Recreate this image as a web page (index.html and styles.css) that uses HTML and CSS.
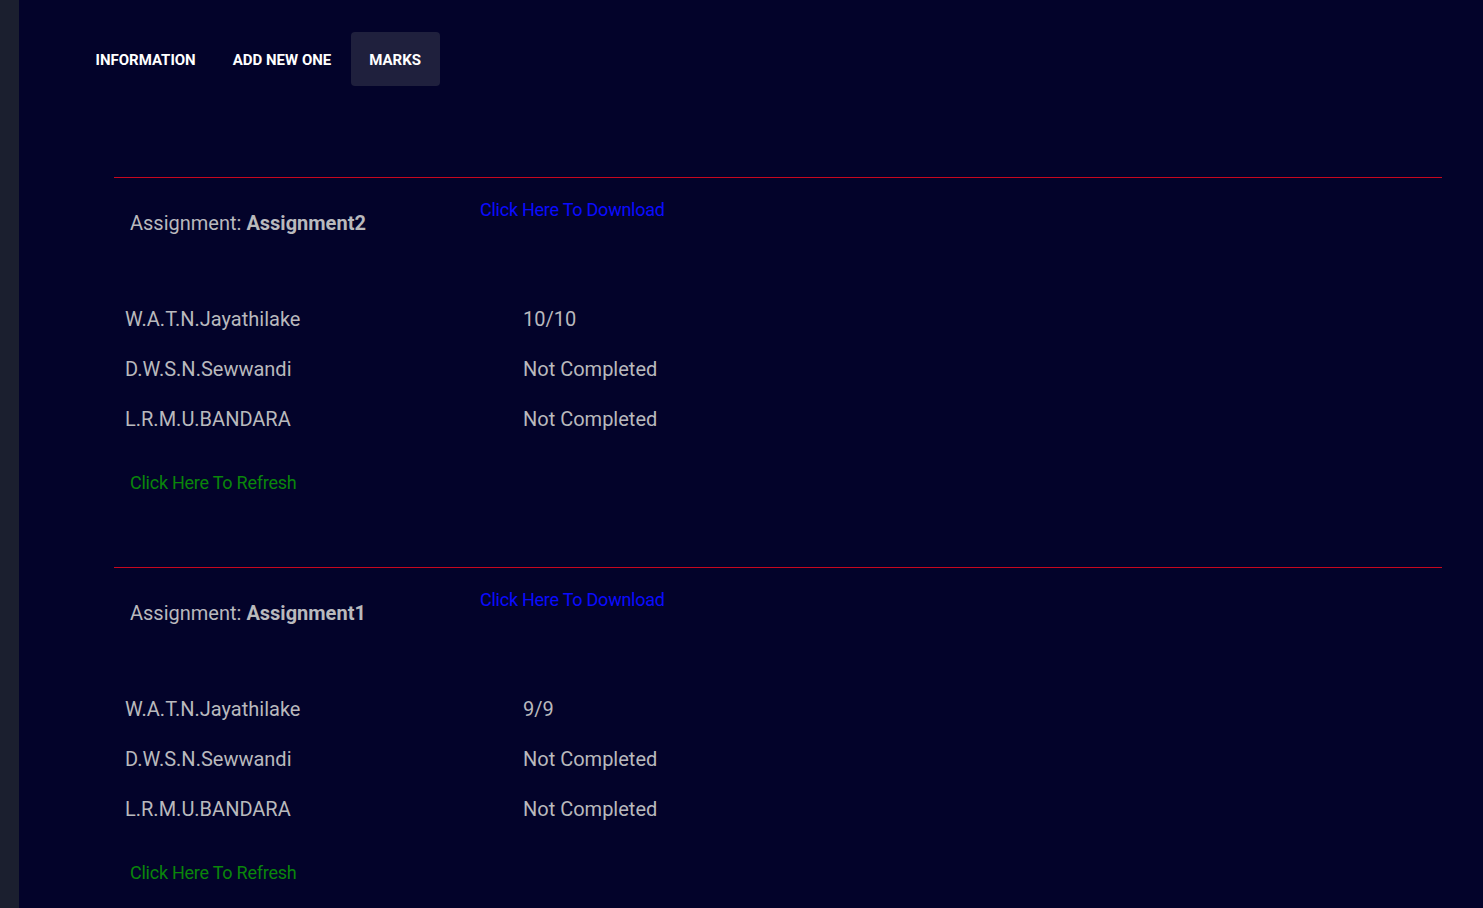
FILE: index.html
```html
<!DOCTYPE html>
<html>
<head>
<meta charset="utf-8">
<link rel="stylesheet" href="styles.css">
</head>
<body>
<div class="app">
  <aside class="sidebar"></aside>
  <main class="main">
    <nav class="tabs">
      <div class="tab">INFORMATION</div>
      <div class="tab">ADD NEW ONE</div>
      <div class="tab active">MARKS</div>
    </nav>
    <div class="list">
      <section class="assignment">
        <div class="head">
          <div class="title">Assignment: <b>Assignment2</b></div>
          <a class="download" href="#">Click Here To Download</a>
        </div>
        <div class="rows">
          <div class="row"><span class="name">W.A.T.N.Jayathilake</span><span class="mark">10/10</span></div>
          <div class="row"><span class="name">D.W.S.N.Sewwandi</span><span class="mark">Not Completed</span></div>
          <div class="row"><span class="name">L.R.M.U.BANDARA</span><span class="mark">Not Completed</span></div>
        </div>
        <a class="refresh" href="#">Click Here To Refresh</a>
      </section>
      <section class="assignment">
        <div class="head">
          <div class="title">Assignment: <b>Assignment1</b></div>
          <a class="download" href="#">Click Here To Download</a>
        </div>
        <div class="rows">
          <div class="row"><span class="name">W.A.T.N.Jayathilake</span><span class="mark">9/9</span></div>
          <div class="row"><span class="name">D.W.S.N.Sewwandi</span><span class="mark">Not Completed</span></div>
          <div class="row"><span class="name">L.R.M.U.BANDARA</span><span class="mark">Not Completed</span></div>
        </div>
        <a class="refresh" href="#">Click Here To Refresh</a>
      </section>
    </div>
  </main>
</div>
</body>
</html>
```
FILE: styles.css
```css
html, body {
  margin: 0;
  padding: 0;
  height: 100%;
  background: #03032a;
  font-family: Roboto, "Liberation Sans", Arial, sans-serif;
  overflow: hidden;
}
.app {
  display: flex;
  min-height: 908px;
}
.sidebar {
  width: 19px;
  flex: none;
  background: #1b1f2f;
}
.main {
  flex: 1;
  padding-top: 32px;
}
.tabs {
  display: flex;
  padding-left: 58px;
}
.tab {
  height: 54px;
  line-height: 56px;
  padding: 0 18.5px;
  color: #ffffff;
  font-size: 15px;
  font-weight: 700;
  border-radius: 4px;
}
.tab.active {
  background: #1f203d;
  margin-left: 1px;
}
.list {
  margin: 91px 41px 0 95px;
}
.assignment {
  border-top: 1px solid #c8071e;
  height: 389px;
}
.head {
  display: flex;
  align-items: flex-start;
}
.title {
  width: 350px;
  padding-left: 16px;
  margin-top: 33px;
  font-size: 20px;
  line-height: 24px;
  color: #b9b9bd;
}
.title b {
  font-weight: 700;
}
.download {
  margin-top: 21px;
  font-size: 18px;
  line-height: 22px;
  letter-spacing: -0.25px;
  color: #0b0bff;
  text-decoration: none;
}
.rows {
  margin-top: 59px;
  padding-left: 11px;
}
.row {
  display: flex;
  height: 50px;
  align-items: center;
  font-size: 20px;
  color: #b9b9bd;
}
.name {
  width: 398px;
}
.refresh {
  display: inline-block;
  margin: 28px 0 0 16px;
  font-size: 18px;
  line-height: 22px;
  letter-spacing: -0.25px;
  color: #0a860a;
  text-decoration: none;
}
```
